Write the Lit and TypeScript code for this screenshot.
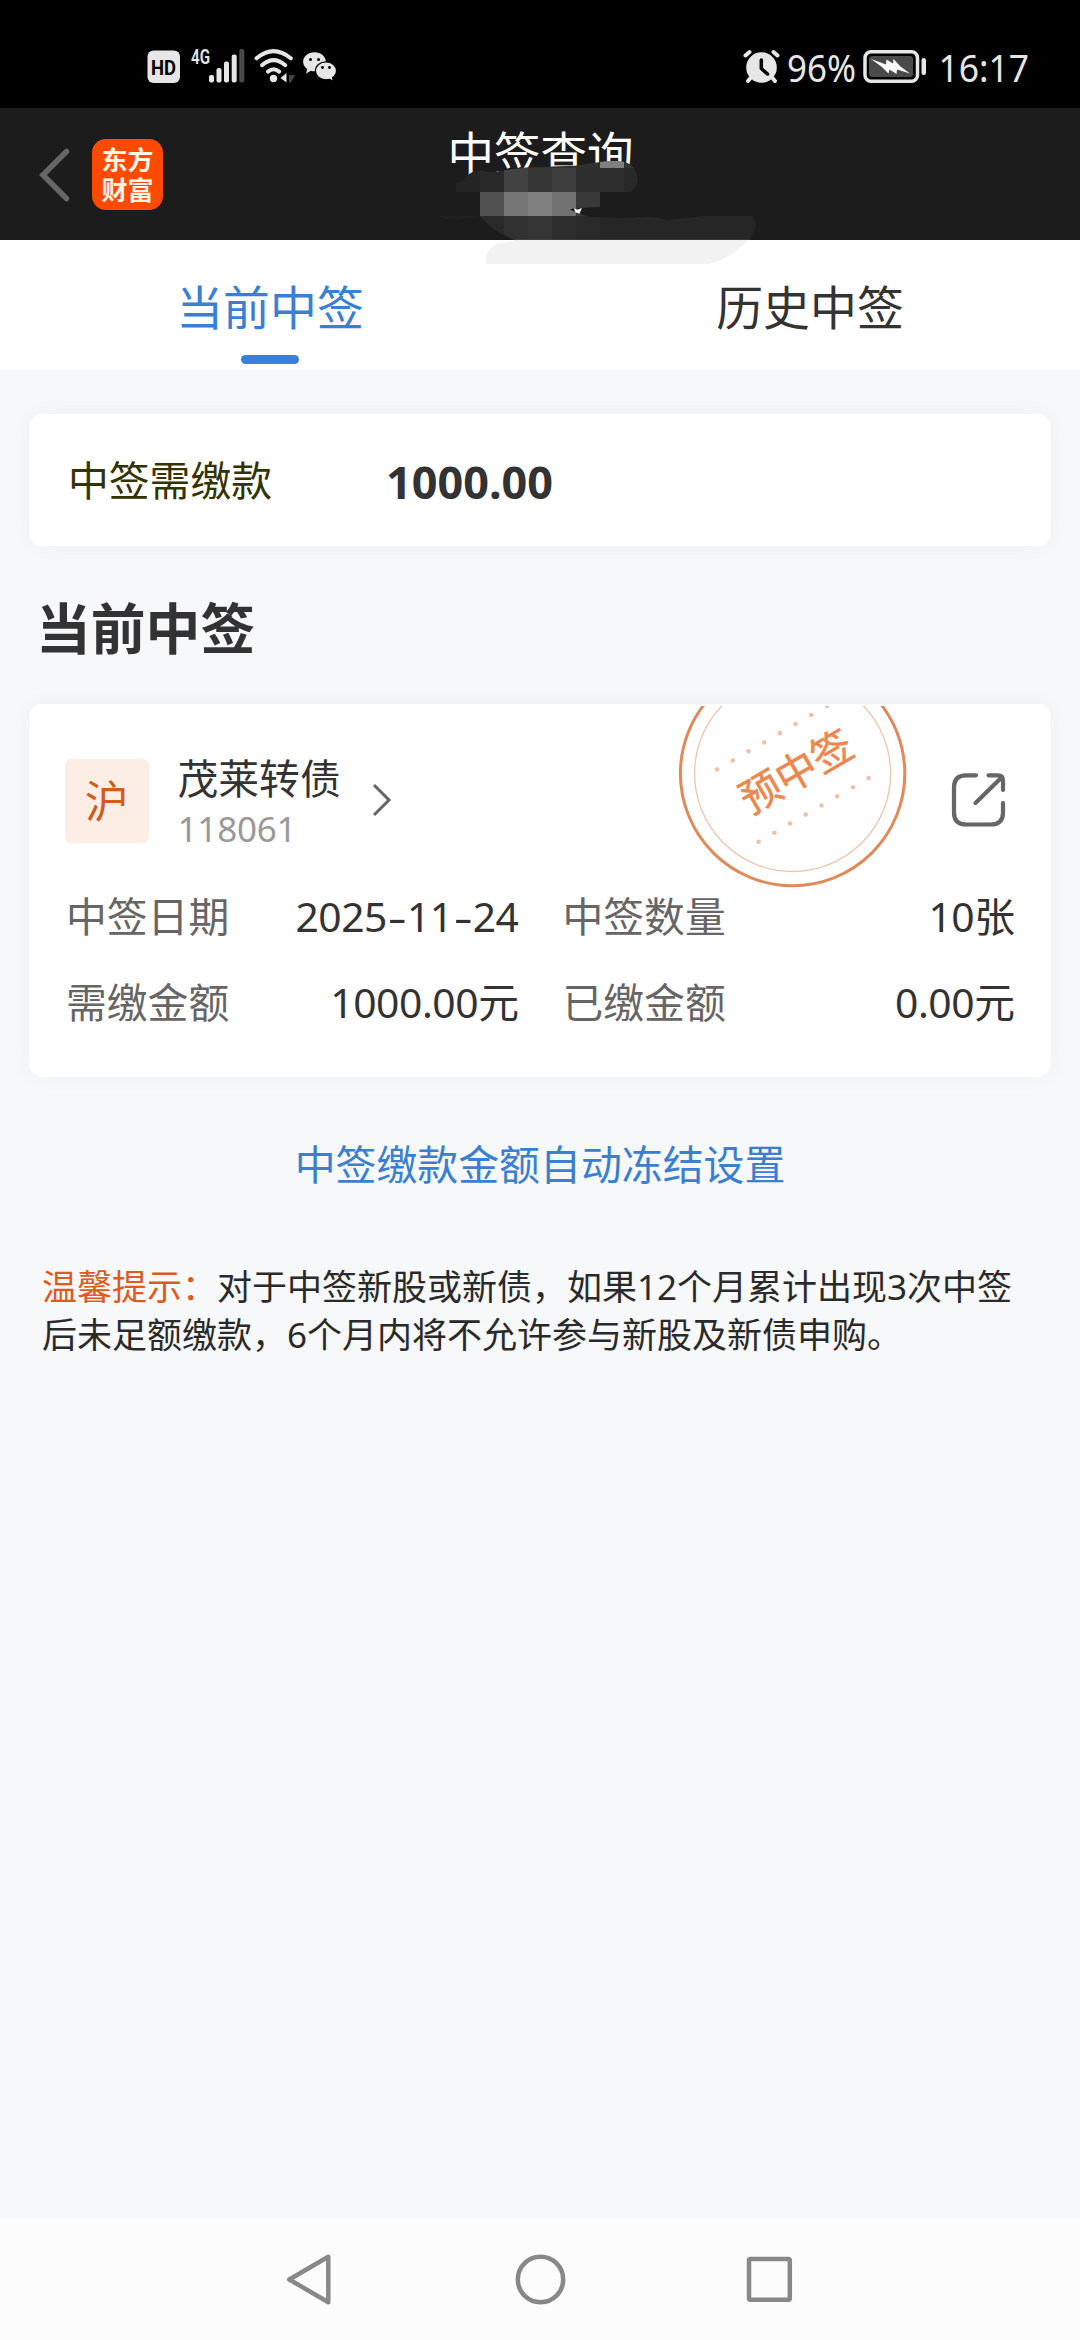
import { LitElement, html, css, svg } from "lit";
import { customElement, property } from "lit/decorators.js";

const FONT = css`"Noto Sans", "Noto Sans CJK SC", sans-serif`;

@customElement("status-bar")
class StatusBar extends LitElement {
  static styles = css`
    :host {
      display: flex;
      justify-content: space-between;
      height: 108px;
      background: #000;
    }
    svg {
      display: block;
      font-family: ${FONT};
      fill: #e6e6e6;
    }
    .hd {
      font-family: Roboto, sans-serif;
      font-size: 21px;
      font-weight: 700;
      fill: #000;
    }
    .net {
      font-family: Roboto, sans-serif;
      font-size: 21px;
      font-weight: 600;
    }
    .num {
      font-size: 38px;
    }
  `;

  render() {
    return html`
      <svg width="360" height="108" viewBox="0 0 360 108">
        <rect x="147.5" y="50.5" width="32.5" height="32.5" rx="6" />
        <text class="hd" x="151" y="74.5" textLength="25" lengthAdjust="spacingAndGlyphs">HD</text>
        <text class="net" x="191" y="64" textLength="19" lengthAdjust="spacingAndGlyphs">4G</text>
        <rect x="209" y="75" width="5" height="7.5" rx="2" />
        <rect x="216.5" y="68" width="5" height="14.5" rx="2" />
        <rect x="224" y="61.5" width="5" height="21" rx="2" />
        <rect x="231.7" y="54.5" width="5" height="28" rx="2" />
        <rect x="239.3" y="49" width="5" height="33.5" rx="2" fill="#4a4a4a" />
        <g fill="none" stroke="#e6e6e6" stroke-width="4" stroke-linecap="round">
          <path d="M256.5 58.3Q273.5 44 290.8 58.3" />
          <path d="M262 65.2Q273.5 55 285.3 65.2" />
          <path d="M268 71.6Q273.5 67 279.2 71.6" />
        </g>
        <circle cx="273.5" cy="78.5" r="3.7" />
        <path d="M286.5 73V82.5L280.5 78Z" />
        <path d="M289 75H295L291 82.5H289Z" fill="#444" />
        <path d="M314.5 52.3c-6.3 0-11.4 4.2-11.4 9.4 0 3 1.6 5.5 4 7.2l-1 4.9 4.6-3.1c1.2.4 2.5.5 3.8.5 6.3 0 11.4-4.3 11.4-9.5s-5.1-9.4-11.4-9.4z" />
        <path
          d="M326 61.8c-6 0-10.6 4-10.6 9s4.6 9 10.6 9c1.3 0 2.5-.2 3.6-.5l3.8 2-.8-3.7c2.4-1.6 3.9-4 3.9-6.8 0-5-4.500-9-10.500-9z"
          stroke="#000"
          stroke-width="1.2"
        />
        <g fill="#000">
          <circle cx="310.5" cy="59.5" r="1.5" />
          <circle cx="318.5" cy="59.5" r="1.5" />
          <circle cx="322.5" cy="67.5" r="1.4" />
          <circle cx="329.5" cy="67.5" r="1.4" />
        </g>
      </svg>
      <svg width="350" height="108" viewBox="730 0 350 108">
        <g stroke="#e6e6e6" stroke-width="4" stroke-linecap="round">
          <path d="M745.5 55.5L749.5 52M777.5 55.5L773.5 52M750.5 78L748 81M772.5 78L775 81" />
        </g>
        <circle cx="761.5" cy="67.5" r="15.3" />
        <path d="M761.3 60V68.5L767.5 74" fill="none" stroke="#000" stroke-width="3.5" stroke-linecap="round" stroke-linejoin="round" />
        <text class="num" x="787" y="81.5" textLength="69" lengthAdjust="spacingAndGlyphs">96%</text>
        <rect x="865" y="51.7" width="52.5" height="29.5" rx="6" fill="none" stroke="#e6e6e6" stroke-width="3.5" />
        <rect x="869" y="56" width="44" height="21" rx="3" fill="#4a4a4a" />
        <path d="M871 59L886 64.5L886.5 59.5L893 63.5L893.5 59L900.5 66.5L910 73.5L897 69.5L896.5 74L889.5 69.5L888.5 73.5L882 67Z" fill="#fff" />
        <rect x="921.5" y="58" width="4.5" height="17" rx="2.2" />
        <text class="num" x="938.5" y="81.5" textLength="90.5" lengthAdjust="spacingAndGlyphs">16:17</text>
      </svg>
    `;
  }
}

@customElement("title-bar")
class TitleBar extends LitElement {
  static styles = css`
    :host {
      position: relative;
      display: grid;
      grid-template-columns: 163px 1fr 163px;
      height: 132px;
      background: #1c1c1c;
      font-family: ${FONT};
    }
    .left {
      display: flex;
      align-items: center;
      gap: 22px;
      padding: 0 0 0 38px;
    }
    .back {
      width: 32px;
      height: 56px;
      flex: none;
      margin-top: 2px;
    }
    .logo {
      flex: none;
      display: flex;
      flex-direction: column;
      align-items: center;
      width: 71px;
      height: 71px;
      box-sizing: border-box;
      padding-top: 7px;
      border-radius: 14px;
      background: #ff4a00;
      color: #fff6e8;
      font-family: "Liberation Sans", "Noto Sans CJK SC", sans-serif;
      font-size: 26px;
      line-height: 30px;
      font-weight: 700;
    }
    .title {
      padding: 13px 0 0 1px;
      color: #fff;
      font-size: 46.5px;
      line-height: 64px;
      text-align: center;
    }
    .smear {
      position: absolute;
      left: 400px;
      top: -8px;
      z-index: 1;
    }
  `;

  private cell(x: number, y: number, w: number, fill: string) {
    return svg`<rect x=${x} y=${y} width=${w} height="72.5" fill=${fill} />`;
  }

  render() {
    const cells: [number, number, number, string][] = [
      [312, 132, 288, "#303030"], [600, 132, 72, "#808080"], [672, 132, 60, "#333"],
      [90, 204, 78, "#1c1c1c"], [168, 204, 73, "#242424"], [240, 204, 73, "#292929"],
      [312, 204, 73, "#424242"], [384, 204, 73, "#363636"], [456, 204, 73, "#3e3e3e"],
      [528, 204, 145, "#2d2d2d"], [672, 204, 60, "#292929"],
      [90, 276, 151, "#1c1c1c"], [240, 276, 73, "#505050"], [312, 276, 73, "#767676"],
      [384, 276, 73, "#808080"], [456, 276, 73, "#727272"], [528, 276, 72, "#393939"],
      [600, 276, 130, "#1c1c1c"],
      [90, 348, 151, "#202020"], [240, 348, 73, "#2a2a2a"], [312, 348, 73, "#313131"],
      [384, 348, 73, "#363636"], [456, 348, 73, "#2e2e2e"], [528, 348, 73, "#2a2a2a"],
      [600, 348, 480, "#262626"],
      [240, 420, 840, "#f2f2f2"],
    ];
    return html`
      <div class="left">
        <svg class="back" viewBox="0 0 32 56">
          <path d="M28.5 4.5L5 28L28.5 51.5" fill="none" stroke="#666" stroke-width="5.5" stroke-linecap="round" />
        </svg>
        <div class="logo"><span>东方</span><span>财富</span></div>
      </div>
      <div class="title">中签查询</div>
      <svg class="smear" width="400" height="280" viewBox="0 0 1200 840">
        <defs>
          <clipPath id="brush">
            <path
              d="M95 275L185 243Q215 208 245 211Q270 222 310 211L385 202L525 197L600 186Q690 172 706 212Q724 250 693 275L640 288L600 320L530 325L545 344L580 352L690 354Q760 342 800 361L910 348H1058Q1070 362 1066 385Q1060 406 1045 420Q985 480 925 492H256Q258 432 312 428L350 421Q290 404 242 350L165 360Q130 360 118 348Q85 315 95 275Z"
            />
          </clipPath>
        </defs>
        <g clip-path="url(#brush)">${cells.map((c) => this.cell(...c))}</g>
        <path d="M510 329L522 325L528 330L522 334Z" fill="#111" />
        <path d="M521 325L532 329L546 324L538 341L527 337Z" fill="#fff" />
        <path d="M340 419H1050" stroke="#555" stroke-width="2" opacity=".6" />
      </svg>
    `;
  }
}

@customElement("tab-strip")
class TabStrip extends LitElement {
  static styles = css`
    :host {
      display: grid;
      grid-template-columns: 1fr 1fr;
      height: 130px;
      background: #fff;
      font-family: ${FONT};
      font-size: 46.9px;
    }
    .tab {
      display: flex;
      flex-direction: column;
      align-items: center;
      padding-top: 34px;
      line-height: 66px;
      color: #333;
    }
    .active {
      color: #3a7fd5;
    }
    .active::after {
      content: "";
      width: 58px;
      height: 9px;
      margin-top: 15px;
      border-radius: 4.5px;
      background: #3781de;
    }
  `;

  render() {
    return html`
      <div class="tab active">当前中签</div>
      <div class="tab">历史中签</div>
    `;
  }
}

@customElement("win-stamp")
class WinStamp extends LitElement {
  static styles = css`
    :host,
    svg {
      display: block;
    }
    .word {
      font-family: "Noto Sans CJK SC", sans-serif;
      font-size: 41px;
      fill: #ea8850;
      stroke: #ea8850;
      stroke-width: 0.5px;
    }
  `;

  render() {
    const dots = Array.from({ length: 8 }, (_, i) => i);
    return html`
      <svg width="230" height="184" viewBox="678 705.5 230 184">
        <circle cx="792.6" cy="773" r="112.2" fill="none" stroke="#e08a5a" stroke-width="3" />
        <circle cx="792.6" cy="773" r="98" fill="none" stroke="#efc4ab" stroke-width="1.3" />
        <g fill="#efc2ab">
          ${dots.map(
            (i) => svg`
              <circle cx=${717 + i * 15.71} cy=${769 - i * 9.09} r="2.3" />
              <circle cx=${758.6 + i * 15.71} cy=${841.3 - i * 9.09} r="2.3" />`
          )}
        </g>
        <text class="word" text-anchor="middle" transform="translate(796 770.5) rotate(-30)" y="15.5">预中签</text>
      </svg>
    `;
  }
}

@customElement("win-card")
class WinCard extends LitElement {
  @property() market = "";
  @property() name = "";
  @property() code = "";

  static styles = css`
    :host {
      position: relative;
      display: block;
      box-sizing: border-box;
      height: 372.5px;
      padding: 48px 37px 0 36px;
      border-radius: 13px;
      background: #fff;
      box-shadow: 0 0 22px rgba(0, 0, 0, 0.035);
      font-family: ${FONT};
      font-size: 40.8px;
      color: #333;
    }
    .stamp {
      position: absolute;
      left: 649px;
      top: 1.5px;
    }
    .head {
      display: flex;
      align-items: flex-start;
    }
    .market {
      width: 83.5px;
      height: 84px;
      margin: 6.5px 0 0;
      border-radius: 6px;
      background: #fdeee5;
      color: #d25c1c;
      font-size: 44px;
      line-height: 84px;
      text-align: center;
    }
    .names {
      margin-left: 29px;
      margin-top: -1px;
    }
    .name {
      line-height: 54px;
    }
    .code {
      font-size: 35px;
      line-height: 46px;
      margin-top: 1px;
      letter-spacing: -0.2px;
      color: #999;
    }
    .chevron {
      width: 20px;
      height: 36px;
      margin: 30px 0 0 31.5px;
    }
    .share {
      width: 58px;
      height: 58px;
      margin: 19px 6px 0 auto;
    }
    .facts {
      display: grid;
      grid-template-columns: 452.5px 452px;
      column-gap: 44px;
      padding: 32px 0 0 1px;
    }
    .fact {
      display: flex;
      justify-content: space-between;
      height: 86px;
      line-height: 64px;
      white-space: nowrap;
    }
    .label {
      color: #666;
    }
    .value {
      letter-spacing: -0.45px;
    }
    .dash {
      display: inline-block;
      width: 20px;
      text-align: center;
      transform: scaleX(1.45);
    }
  `;

  render() {
    return html`
      <win-stamp class="stamp"></win-stamp>
      <div class="head">
        <div class="market">${this.market}</div>
        <div class="names">
          <div class="name">${this.name}</div>
          <div class="code">${this.code}</div>
        </div>
        <svg class="chevron" viewBox="0 0 20 36">
          <path d="M2 3L17 18L2 33" fill="none" stroke="#666" stroke-width="3" />
        </svg>
        <svg class="share" viewBox="950 771.5 58 58" fill="none" stroke="#666" stroke-width="4.2" stroke-linecap="round" stroke-linejoin="round">
          <path d="M976 775.8H966Q954 775.8 954 787.8V813Q954 825 966 825H991Q1003 825 1003 813V803.5" />
          <path d="M988.5 775.8H998Q1003 775.8 1003 781V790.5M1001.5 778L975.5 803.5" />
        </svg>
      </div>
      <div class="facts">
        <div class="fact">
          <span class="label">中签日期</span>
          <span class="value">2025<span class="dash">-</span>11<span class="dash">-</span>24</span>
        </div>
        <div class="fact"><span class="label">中签数量</span><span class="value">10张</span></div>
        <div class="fact"><span class="label">需缴金额</span><span class="value">1000.00元</span></div>
        <div class="fact"><span class="label">已缴金额</span><span class="value">0.00元</span></div>
      </div>
    `;
  }
}

@customElement("nav-keys")
class NavKeys extends LitElement {
  static styles = css`
    :host {
      display: flex;
      justify-content: center;
      align-items: center;
      gap: 172px;
      height: 122px;
      background: #fcfcfc;
    }
    svg {
      width: 57px;
      height: 57px;
      fill: none;
      stroke: #888;
      stroke-width: 4.5;
      stroke-linejoin: round;
    }
  `;

  render() {
    return html`
      <svg viewBox="0 0 57 57"><path d="M45.3 5.8V51.2L6.3 28.5Z" /></svg>
      <svg viewBox="0 0 57 57"><circle cx="28.5" cy="28.5" r="22.7" /></svg>
      <svg viewBox="0 0 57 57"><rect x="8" y="8" width="40.8" height="40.8" rx="1.5" /></svg>
    `;
  }
}

@customElement("app-root")
class AppRoot extends LitElement {
  static styles = css`
    :host {
      display: flex;
      flex-direction: column;
      height: 2340px;
      background: #f7f8fa;
      color: #333;
      font-family: ${FONT};
    }
    .content {
      flex: 1;
      padding: 43.5px 29px 0;
    }
    .due {
      display: flex;
      align-items: center;
      gap: 114px;
      box-sizing: border-box;
      height: 132.5px;
      padding: 0 39px;
      border-radius: 13px;
      background: #fff;
      box-shadow: 0 0 22px rgba(0, 0, 0, 0.035);
    }
    .due-label {
      padding-bottom: 3px;
      font-size: 40.8px;
      color: #333300;
    }
    .due-value {
      font-size: 45px;
      font-weight: 700;
      padding-top: 3px;
    }
    .heading {
      margin: 45.5px 0 40.5px 7px;
      font-size: 54.8px;
      line-height: 72px;
      font-weight: 700;
    }
    .link {
      margin-top: 56px;
      font-size: 40.9px;
      line-height: 62px;
      text-align: center;
      color: #3a7fd0;
    }
    .tip {
      margin: 68px 0 0 13px;
      font-size: 35px;
      line-height: 48px;
      color: #2a2a2a;
      white-space: nowrap;
    }
    .tip-lead {
      color: #e05a1a;
    }
  `;

  render() {
    return html`
      <status-bar></status-bar>
      <title-bar></title-bar>
      <tab-strip></tab-strip>
      <div class="content">
        <div class="due">
          <span class="due-label">中签需缴款</span>
          <span class="due-value">1000.00</span>
        </div>
        <div class="heading">当前中签</div>
        <win-card market="沪" name="茂莱转债" code="118061"></win-card>
        <div class="link">中签缴款金额自动冻结设置</div>
        <div class="tip">
          <span class="tip-lead">温馨提示：</span>对于中签新股或新债，如果12个月累计出现3次中签<br />后未足额缴款，6个月内将不允许参与新股及新债申购。
        </div>
      </div>
      <nav-keys></nav-keys>
    `;
  }
}
